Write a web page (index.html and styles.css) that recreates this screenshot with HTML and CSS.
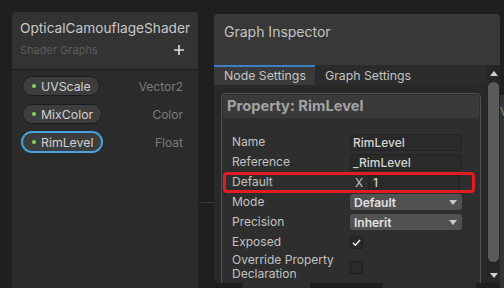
FILE: index.html
```html
<!DOCTYPE html>
<html lang="en">

<head>
  <meta charset="UTF-8">
  <meta name="viewport" content="width=device-width, initial-scale=1.0">
  <title>Shader Graph - Graph Inspector</title>
  <link rel="stylesheet" href="styles.css">
</head>

<body>
  <main class="workspace">
    <section class="blackboard">
      <header class="blackboard-header">
        <h1 class="blackboard-title">OpticalCamouflageShader</h1>
        <div class="blackboard-sub">
          <span>Shader Graphs</span>
          <svg class="add-btn" width="10" height="10" viewBox="0 0 10 10">
            <path d="M5 0v10M0 5h10" stroke="#dcdcdc" stroke-width="1.6" />
          </svg>
        </div>
      </header>
      <ul class="prop-list">
        <li class="prop-item">
          <span class="pill"><i class="dot"></i>UVScale</span>
          <span class="prop-type">Vector2</span>
        </li>
        <li class="prop-item">
          <span class="pill"><i class="dot"></i>MixColor</span>
          <span class="prop-type">Color</span>
        </li>
        <li class="prop-item">
          <span class="pill is-selected"><i class="dot"></i>RimLevel</span>
          <span class="prop-type">Float</span>
        </li>
      </ul>
    </section>

    <div class="graph-gap"><span class="edge-line"></span></div>

    <div class="inspector-col">
      <section class="inspector">
        <header class="inspector-header">Graph Inspector</header>
        <div class="inspector-body">
          <div class="inspector-main">
            <nav class="tabs">
              <span class="tab is-active">Node Settings</span>
              <span class="tab">Graph Settings</span>
            </nav>
            <div class="inspector-content">
              <div class="prop-box">
                <div class="prop-box-header">Property: RimLevel</div>
                <div class="prop-fields">
                  <div class="field-row">
                    <span class="field-label">Name</span>
                    <span class="field-input">RimLevel</span>
                  </div>
                  <div class="field-row">
                    <span class="field-label">Reference</span>
                    <span class="field-input">_RimLevel</span>
                  </div>
                  <div class="field-row">
                    <span class="field-label">Default</span>
                    <span class="axis-label">X</span>
                    <span class="field-input field-input--short">1</span>
                    <span class="annotation"></span>
                  </div>
                  <div class="field-row">
                    <span class="field-label">Mode</span>
                    <span class="dropdown">Default<i class="caret"></i></span>
                  </div>
                  <div class="field-row">
                    <span class="field-label">Precision</span>
                    <span class="dropdown">Inherit<i class="caret"></i></span>
                  </div>
                  <div class="field-row">
                    <span class="field-label">Exposed</span>
                    <span class="checkbox">
                      <svg width="11" height="11" viewBox="0 0 11 11">
                        <path d="M2 5.8l2.4 2.4L9 3" fill="none" stroke="#e6e6e6" stroke-width="1.5" />
                      </svg>
                    </span>
                  </div>
                  <div class="field-row field-row--tall">
                    <span class="field-label">Override Property Declaration</span>
                    <span class="checkbox"></span>
                  </div>
                </div>
              </div>
            </div>
          </div>
          <div class="scrollbar">
            <span class="scroll-btn"><i class="arrow-up"></i></span>
            <span class="scroll-thumb"></span>
            <span class="scroll-btn scroll-btn--down"><i class="arrow-down"></i></span>
          </div>
        </div>
      </section>
      <div class="graph-peek">
        <span class="peek-block peek-a"></span>
        <span class="peek-block peek-b"></span>
      </div>
    </div>

    <div class="side-panel">V</div>
  </main>
</body>

</html>
```

FILE: styles.css
```css
html {
  box-sizing: border-box;
  font-family: Inter, "Noto Sans", sans-serif;
  font-size: 12px;
}

*,
*::before,
*::after {
  box-sizing: border-box;
}

body {
  margin: 0;
  width: 504px;
  height: 288px;
  overflow: hidden;
  background-color: #1f1f1f;
}

.workspace {
  display: flex;
  height: 288px;
  padding: 12px 0 0 12px;
}

/* blackboard */
.blackboard {
  flex: none;
  width: 186px;
  background-color: #2b2b2b;
  border-radius: 4px 4px 0 0;
}

.blackboard-header {
  padding: 7px 8px 11px;
  background-color: #333333;
  border-radius: 4px 4px 0 0;
  border-bottom: 1px solid #1e1e1e;
}

.blackboard-title {
  margin: 0;
  font-size: 13.7px;
  font-weight: 400;
  line-height: 18px;
  color: #c8c8c8;
  white-space: nowrap;
}

.blackboard-sub {
  display: flex;
  justify-content: space-between;
  align-items: center;
  height: 16px;
  margin-top: 5px;
  font-size: 11px;
  color: #5c5c5c;
}

.add-btn {
  margin-right: 6px;
}

.prop-list {
  display: flex;
  flex-direction: column;
  gap: 8px;
  margin: 0;
  padding: 6px 15px 0 10px;
  list-style: none;
}

.prop-item {
  display: flex;
  justify-content: space-between;
  align-items: center;
  height: 20px;
}

.pill {
  display: inline-flex;
  align-items: center;
  height: 20px;
  padding: 0 8px 0 9px;
  border: 1px solid #1c1c1c;
  border-radius: 10px;
  background-color: #3d3d3d;
  color: #d2d2d2;
  font-size: 12.3px;
}

.pill.is-selected {
  border-color: #47a3df;
  box-shadow: 0 0 0 1px #47a3df;
}

.dot {
  width: 4px;
  height: 4px;
  margin-right: 5px;
  border-radius: 50%;
  background-color: #86d75a;
}

.prop-type {
  font-size: 12px;
  color: #7c7c7c;
}

/* space between panels */
.graph-gap {
  flex: none;
  width: 16px;
}

.edge-line {
  display: block;
  margin: 190px 0 0 1px;
  border-top: 1px solid #3a3a3a;
}

/* inspector */
.inspector-col {
  flex: none;
  display: flex;
  flex-direction: column;
  width: 286px;
}

.inspector {
  display: flex;
  flex-direction: column;
  height: 269px;
  margin-top: 2px;
  overflow: hidden;
  border-radius: 4px;
  background-color: #282828;
}

.inspector-header {
  flex: none;
  height: 51px;
  padding: 9px 10px 0;
  background-color: #383838;
  font-size: 14px;
  line-height: 18px;
  color: #c4c4c4;
}

.inspector-body {
  display: flex;
  flex: 1;
  min-height: 0;
}

.inspector-main {
  display: flex;
  flex-direction: column;
  width: 273px;
}

.tabs {
  display: flex;
  flex: none;
  height: 20px;
  background-color: #2b2b2b;
}

.tab {
  padding: 0 0 0 10px;
  border-top: 2px solid transparent;
  font-size: 12.3px;
  line-height: 18px;
  color: #c4c4c4;
  white-space: nowrap;
}

.tab.is-active {
  width: 101px;
  background-color: #3a3a3a;
  border-top-color: #3c7fc2;
}

.inspector-content {
  flex: 1;
  padding: 8px 6px 0 7px;
  overflow: hidden;
}

.prop-box {
  height: 300px;
  border: 1px solid #505050;
  border-radius: 4px;
  background-color: #2e2e2e;
}

.prop-box-header {
  height: 23px;
  margin: 1px;
  padding-left: 4px;
  border-radius: 3px;
  background-color: #3a3a3a;
  font-size: 14.7px;
  font-weight: 700;
  line-height: 23px;
  color: #a3a3a3;
}

.prop-fields {
  padding: 13px 0 0 10px;
}

.field-row {
  position: relative;
  display: flex;
  align-items: center;
  height: 20px;
}

.field-row--tall {
  height: 30px;
}

.field-label {
  flex: none;
  width: 118px;
  font-size: 12px;
  line-height: 14px;
  color: #c2c2c2;
}

.field-input {
  width: 112px;
  height: 17px;
  padding-left: 2px;
  border: 1px solid #232323;
  border-radius: 3px;
  background-color: #2a2a2a;
  font-size: 12px;
  font-weight: 500;
  line-height: 15px;
  color: #d4d4d4;
}

.axis-label {
  width: 18px;
  padding-left: 5px;
  color: #c2c2c2;
}

.field-input--short {
  width: 92px;
  padding-left: 4px;
}

.dropdown {
  display: flex;
  justify-content: space-between;
  align-items: center;
  width: 112px;
  height: 16px;
  padding: 0 5px 0 4px;
  border-radius: 3px;
  background-color: #515151;
  font-size: 12px;
  font-weight: 600;
  color: #e2e2e2;
}

.caret {
  width: 0;
  height: 0;
  border-left: 4px solid transparent;
  border-right: 4px solid transparent;
  border-top: 5px solid #c8c8c8;
}

.checkbox {
  display: flex;
  justify-content: center;
  align-items: center;
  width: 13px;
  height: 13px;
  border: 1px solid #1f1f1f;
  border-radius: 2px;
  background-color: #2a2a2a;
}

/* red mark drawn on the screenshot */
.annotation {
  position: absolute;
  top: 0;
  left: -9px;
  width: 252px;
  height: 21px;
  border: 3px solid #e31b23;
  border-radius: 4px;
}

.scrollbar {
  display: flex;
  flex-direction: column;
  align-items: center;
  width: 13px;
  background-color: #262626;
}

.scroll-btn {
  display: flex;
  justify-content: center;
  align-items: center;
  height: 17px;
}

.scroll-btn--down {
  align-items: flex-end;
  height: 21px;
  padding-bottom: 5px;
}

.arrow-up,
.arrow-down {
  width: 0;
  height: 0;
  border-left: 4px solid transparent;
  border-right: 4px solid transparent;
}

.arrow-up {
  border-bottom: 5px solid #d0d0d0;
}

.arrow-down {
  border-top: 5px solid #d0d0d0;
}

.scroll-thumb {
  width: 11px;
  height: 180px;
  border-radius: 6px;
  background-color: #5a5a5a;
}

.graph-peek {
  display: flex;
  height: 5px;
}

.peek-block {
  background-color: #2e2e2e;
}

.peek-a {
  width: 67px;
  margin-left: 29px;
}

.peek-b {
  width: 93px;
  margin-left: 73px;
}

.side-panel {
  flex: none;
  width: 4px;
  height: 200px;
  margin-top: 83px;
  padding-top: 9px;
  overflow: hidden;
  background-color: #333333;
  font-size: 12px;
  color: #8a8a8a;
}
```
